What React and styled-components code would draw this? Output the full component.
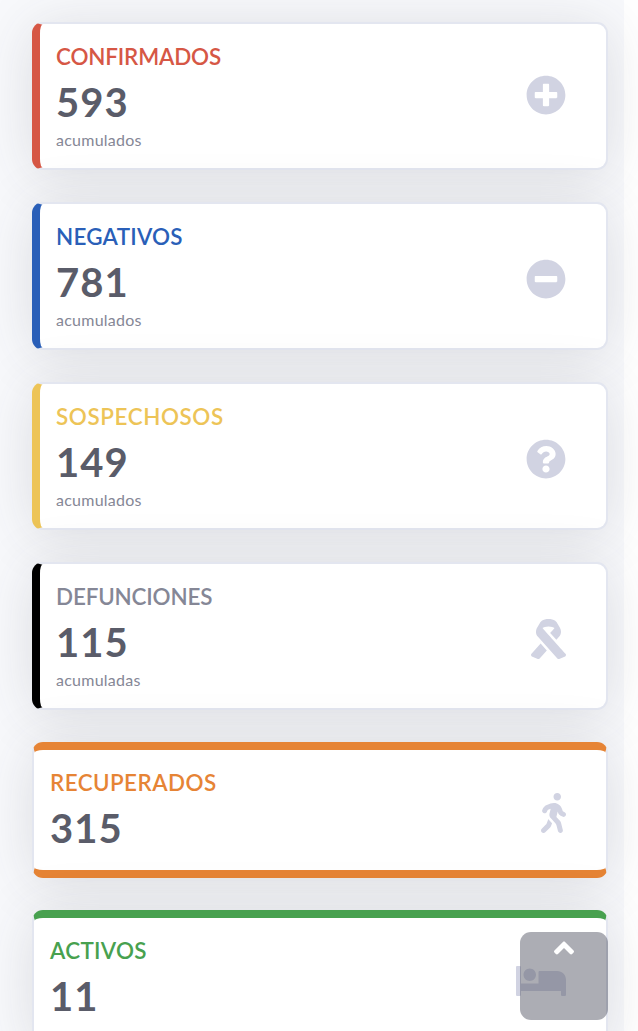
import React from "react";
import styled, { createGlobalStyle } from "styled-components";
import {
  FaPlusCircle,
  FaMinusCircle,
  FaQuestionCircle,
  FaRibbon,
  FaWalking,
  FaBed,
  FaAngleUp,
} from "react-icons/fa";

const lightBackground = "#f8f9fc";
const cardBorder = "#e3e6f0";
const iconGray = "#d1d3e2";
const textDark = "#5a5c69";
const textMuted = "#858796";

const GlobalStyle = createGlobalStyle`
  * {
    box-sizing: border-box;
  }
  body {
    margin: 0;
    background: #fff;
    font-family: Lato, "Open Sans", sans-serif;
    overflow: hidden;
  }
`;

const Page = styled.main`
  width: 624px;
  height: 1031px;
  padding: 22px 16px 0 32px;
  background: ${lightBackground};
`;

const CardList = styled.div`
  display: flex;
  flex-direction: column;
  gap: 32px;
`;

const Card = styled.section`
  display: flex;
  align-items: flex-start;
  justify-content: space-between;
  flex-shrink: 0;
  height: 148px;
  padding: 20px 40px 0 16px;
  background: #fff;
  border: 2px solid ${cardBorder};
  border-left: 8px solid ${(props) => props.$color};
  border-radius: 11px;
  box-shadow: 0 5px 56px rgba(58, 59, 69, 0.15);
`;

const BandCard = styled(Card)`
  height: 136px;
  border: 2px solid ${cardBorder};
  border-top: 8px solid ${(props) => props.$color};
  border-bottom: 8px solid ${(props) => props.$color};
`;

const Title = styled.h2`
  margin: 0;
  font-size: 22.4px;
  line-height: 26px;
  font-weight: 600;
  letter-spacing: ${(props) => props.$spacing}px;
  color: ${(props) => props.$color};
`;

const Count = styled.div`
  margin-top: 8px;
  font-size: 40px;
  line-height: 48px;
  font-weight: 700;
  letter-spacing: 1px;
  color: ${textDark};
`;

const Caption = styled.div`
  margin-top: 2px;
  font-size: 16px;
  line-height: 24px;
  letter-spacing: 0.25px;
  color: ${textMuted};
`;

const IconSlot = styled.div`
  display: flex;
  margin-top: ${(props) => props.$top}px;
  color: ${iconGray};

  svg {
    width: ${(props) => props.$width}px;
    height: 40px;
  }
`;

const ScrollTop = styled.button`
  position: fixed;
  right: 30px;
  bottom: 11px;
  display: flex;
  justify-content: center;
  width: 88px;
  height: 88px;
  padding: 0;
  border: none;
  border-radius: 11px;
  background: rgba(90, 92, 105, 0.5);
  color: #fff;

  svg {
    width: 20px;
    height: 32px;
  }
`;

const totals = [
  {
    title: "CONFIRMADOS",
    count: 593,
    caption: "acumulados",
    color: "#d65745",
    icon: FaPlusCircle,
    iconTop: 31,
    spacing: -0.15,
  },
  {
    title: "NEGATIVOS",
    count: 781,
    caption: "acumulados",
    color: "#2a5fb8",
    icon: FaMinusCircle,
    spacing: 0.25,
  },
  {
    title: "SOSPECHOSOS",
    count: 149,
    caption: "acumulados",
    color: "#edc457",
    icon: FaQuestionCircle,
    spacing: 0.6,
  },
  {
    title: "DEFUNCIONES",
    count: 115,
    caption: "acumuladas",
    color: "#000",
    titleColor: textMuted,
    icon: FaRibbon,
    iconWidth: 35,
    spacing: -0.15,
  },
];

const current = [
  {
    title: "RECUPERADOS",
    count: 315,
    color: "#e68435",
    icon: FaWalking,
    iconWidth: 25,
    spacing: 0.45,
  },
  {
    title: "ACTIVOS",
    count: 11,
    color: "#48a14f",
    icon: FaBed,
    iconWidth: 50,
    spacing: 0.3,
  },
];

const CardContent = ({ item, iconTop }) => {
  const Icon = item.icon;

  return (
    <>
      <div>
        <Title $color={item.titleColor || item.color} $spacing={item.spacing}>
          {item.title}
        </Title>
        <Count>{item.count}</Count>
        {item.caption && <Caption>{item.caption}</Caption>}
      </div>
      <IconSlot $top={iconTop} $width={item.iconWidth || 40}>
        <Icon />
      </IconSlot>
    </>
  );
};

const App = () => {
  return (
    <>
      <GlobalStyle />
      <Page>
        <CardList>
          {totals.map((item) => (
            <Card key={item.title} $color={item.color}>
              <CardContent item={item} iconTop={item.iconTop || 35} />
            </Card>
          ))}
          {current.map((item) => (
            <BandCard key={item.title} $color={item.color}>
              <CardContent item={item} iconTop={23} />
            </BandCard>
          ))}
        </CardList>
      </Page>
      <ScrollTop aria-label="Subir">
        <FaAngleUp />
      </ScrollTop>
    </>
  );
};

export default App;
